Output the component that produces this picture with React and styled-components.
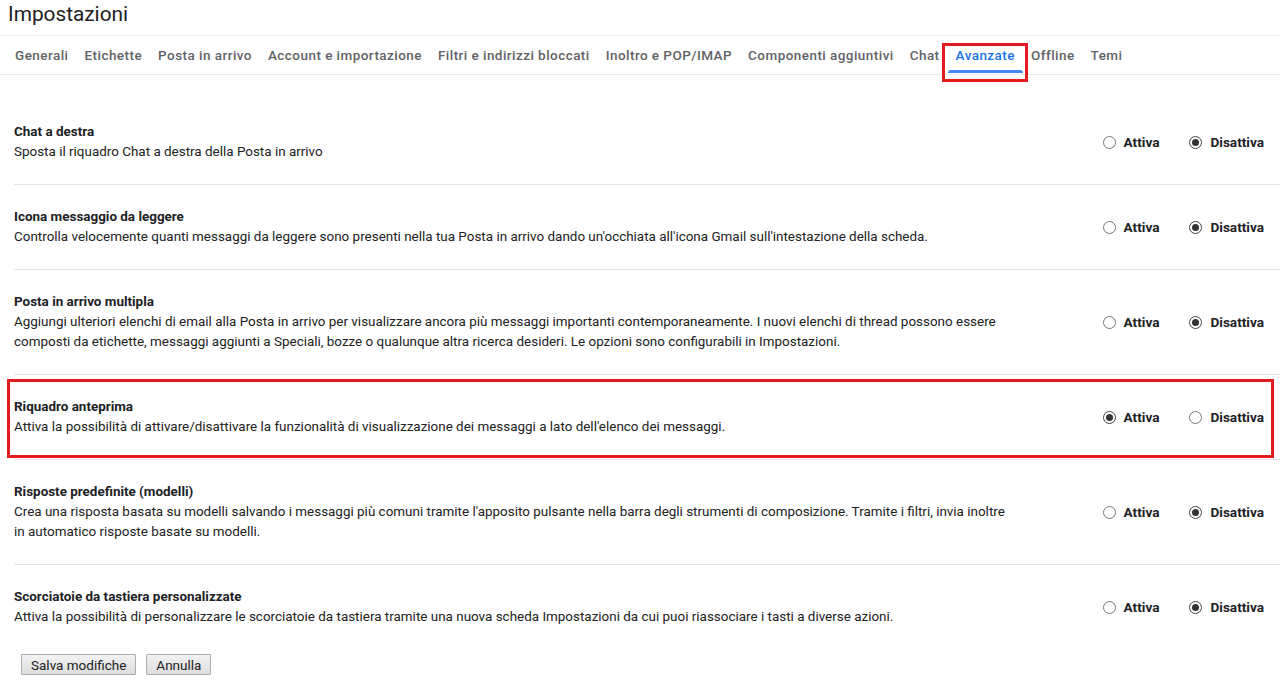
import React from "react";
import styled, { createGlobalStyle, css } from "styled-components";

const GlobalStyle = createGlobalStyle`
  body {
    margin: 0;
    background: #ffffff;
    font-family: Roboto, "Liberation Sans", Arial, sans-serif;
    color: #222222;
  }
`;

const Page = styled.div`
  width: 1280px;
  display: flex;
  flex-direction: column;
`;

const Header = styled.div`
  height: 35px;
  padding-left: 8px;
  font-family: Roboto, "Liberation Sans", sans-serif;
  font-size: 20.8px;
  line-height: 28px;
  color: #202124;
`;

const TabBar = styled.div`
  display: flex;
  align-items: stretch;
  height: 38px;
  padding-left: 7px;
  border-top: 1px solid #eeeeee;
  border-bottom: 1px solid #e8eaed;
`;

const Highlight = css`
  &::after {
    content: "";
    position: absolute;
    border: 3px solid #e51b23;
    pointer-events: none;
  }
`;

const Tab = styled.div`
  position: relative;
  display: flex;
  align-items: center;
  padding: 0 8px;
  font-family: Roboto, "Liberation Sans", sans-serif;
  font-size: 13.5px;
  font-weight: 500;
  letter-spacing: 0.45px;
  color: ${(props) => (props.active ? "#1a73e8" : "#5f6368")};
  white-space: nowrap;

  ${(props) =>
    props.active &&
    css`
      &::before {
        content: "";
        position: absolute;
        left: 0;
        right: 0;
        bottom: 1px;
        height: 3px;
        border-radius: 3px 3px 0 0;
        background: #4285f4;
      }
    `}

  ${(props) =>
    props.marked &&
    css`
      ${Highlight}
      &::after {
        left: -6px;
        right: -5px;
        top: 7px;
        bottom: -8px;
      }
    `}
`;

const Settings = styled.div`
  display: flex;
  flex-direction: column;
  padding-top: 25px;
`;

const Row = styled.div`
  position: relative;
  margin-left: 14px;
  padding: 22px 16px 22px 0;
  display: flex;
  align-items: center;
  justify-content: space-between;
  border-bottom: ${(props) => (props.last ? "none" : "1px solid #e4e4e4")};

  ${(props) =>
    props.marked &&
    css`
      ${Highlight}
      &::after {
        left: -7px;
        right: 6px;
        top: 4px;
        bottom: 1px;
      }
    `}
`;

const Info = styled.div`
  max-width: 1000px;
  font-size: 13.45px;
  line-height: 20px;
`;

const Title = styled.div`
  font-weight: 700;
  color: #202124;
`;

const Desc = styled.div`
  color: #222222;
`;

const Options = styled.div`
  display: flex;
  align-items: center;
  column-gap: 30px;
  flex-shrink: 0;
`;

const Option = styled.label`
  display: flex;
  align-items: center;
  column-gap: 8px;
  font-size: 13.6px;
  font-weight: 700;
  color: #202124;
`;

const Circle = styled.span`
  box-sizing: border-box;
  width: 13px;
  height: 13px;
  border-radius: 50%;
  border: 1px solid ${(props) => (props.checked ? "#444" : "#767676")};
  display: flex;
  align-items: center;
  justify-content: center;

  &::after {
    content: "";
    width: 7px;
    height: 7px;
    border-radius: 50%;
    background: ${(props) => (props.checked ? "#333" : "transparent")};
  }
`;

const Actions = styled.div`
  display: flex;
  column-gap: 10px;
  padding: 5px 0 0 21px;
`;

const Button = styled.button`
  height: 21px;
  padding: 0 9px;
  font-family: Roboto, "Liberation Sans", sans-serif;
  font-size: 13.5px;
  line-height: 18px;
  color: #222;
  background: linear-gradient(#f2f2f2, #dddddd);
  border: 1px solid #adadad;
  border-radius: 1px;
  cursor: pointer;
`;

const tabs = [
  "Generali",
  "Etichette",
  "Posta in arrivo",
  "Account e importazione",
  "Filtri e indirizzi bloccati",
  "Inoltro e POP/IMAP",
  "Componenti aggiuntivi",
  "Chat",
  "Avanzate",
  "Offline",
  "Temi",
];

const settings = [
  {
    title: "Chat a destra",
    desc: "Sposta il riquadro Chat a destra della Posta in arrivo",
    on: false,
  },
  {
    title: "Icona messaggio da leggere",
    desc: "Controlla velocemente quanti messaggi da leggere sono presenti nella tua Posta in arrivo dando un'occhiata all'icona Gmail sull'intestazione della scheda.",
    on: false,
  },
  {
    title: "Posta in arrivo multipla",
    desc: "Aggiungi ulteriori elenchi di email alla Posta in arrivo per visualizzare ancora più messaggi importanti contemporaneamente. I nuovi elenchi di thread possono essere composti da etichette, messaggi aggiunti a Speciali, bozze o qualunque altra ricerca desideri. Le opzioni sono configurabili in Impostazioni.",
    on: false,
  },
  {
    title: "Riquadro anteprima",
    desc: "Attiva la possibilità di attivare/disattivare la funzionalità di visualizzazione dei messaggi a lato dell'elenco dei messaggi.",
    on: true,
    marked: true,
  },
  {
    title: "Risposte predefinite (modelli)",
    desc: "Crea una risposta basata su modelli salvando i messaggi più comuni tramite l'apposito pulsante nella barra degli strumenti di composizione. Tramite i filtri, invia inoltre in automatico risposte basate su modelli.",
    on: false,
  },
  {
    title: "Scorciatoie da tastiera personalizzate",
    desc: "Attiva la possibilità di personalizzare le scorciatoie da tastiera tramite una nuova scheda Impostazioni da cui puoi riassociare i tasti a diverse azioni.",
    on: false,
  },
];

export default function App() {
  return (
    <Page>
      <GlobalStyle />
      <Header>Impostazioni</Header>
      <TabBar>
        {tabs.map((t) => (
          <Tab key={t} active={t === "Avanzate"} marked={t === "Avanzate"}>
            {t}
          </Tab>
        ))}
      </TabBar>
      <Settings>
        {settings.map((s, i) => (
          <Row key={s.title} marked={s.marked} last={i === settings.length - 1}>
            <Info>
              <Title>{s.title}</Title>
              <Desc>{s.desc}</Desc>
            </Info>
            <Options>
              <Option>
                <Circle checked={s.on} />
                Attiva
              </Option>
              <Option>
                <Circle checked={!s.on} />
                Disattiva
              </Option>
            </Options>
          </Row>
        ))}
      </Settings>
      <Actions>
        <Button>Salva modifiche</Button>
        <Button>Annulla</Button>
      </Actions>
    </Page>
  );
}
